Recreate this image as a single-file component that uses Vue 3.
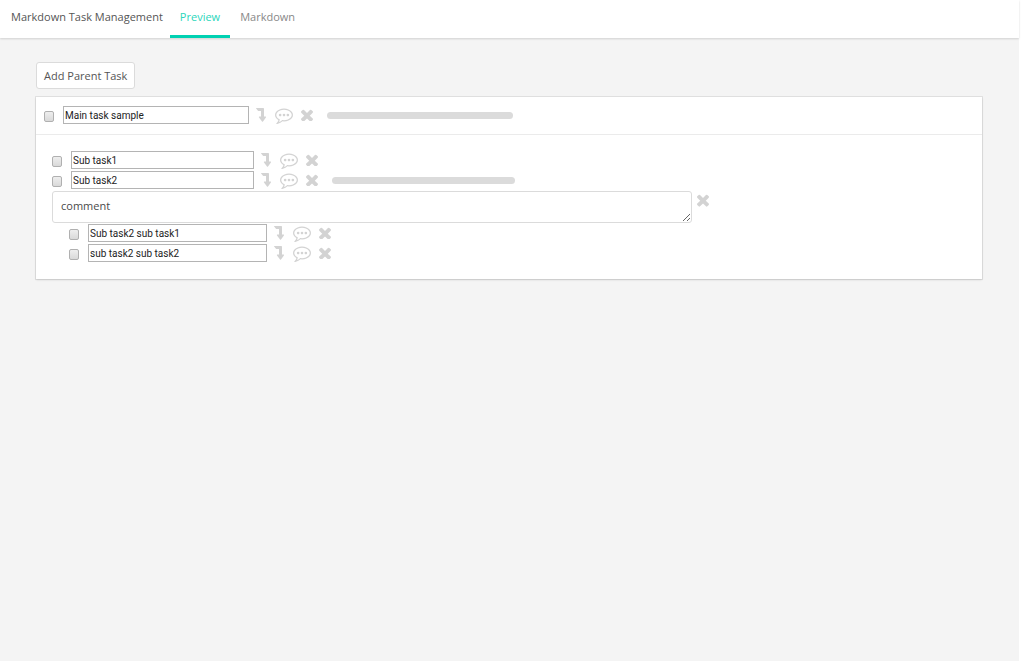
<script setup>
import { ref, reactive } from 'vue'

const activeTab = ref('Preview')
const rows = reactive([
  { id: 'main', level: 0, text: 'Main task sample', progress: 0, done: false },
  { id: 'sub1', level: 1, text: 'Sub task1', done: false },
  { id: 'sub2', level: 1, text: 'Sub task2', progress: 0, comment: 'comment', done: false },
  { id: 'sub2-1', level: 2, text: 'Sub task2 sub task1', done: false },
  { id: 'sub2-2', level: 2, text: 'sub task2 sub task2', done: false },
])
const groups = [
  { name: 'head', rows: rows.slice(0, 1) },
  { name: 'body', rows: rows.slice(1) },
]
</script>

<template>
  <div class="page">
    <header class="nav">
      <span class="brand">Markdown Task Management</span>
      <nav class="tabs">
        <a
          v-for="tab in ['Preview', 'Markdown']"
          :key="tab"
          href="#"
          class="tab"
          :class="{ active: tab === activeTab }"
          @click.prevent="activeTab = tab"
        >{{ tab }}</a>
      </nav>
    </header>

    <main class="content">
      <button type="button" class="add">Add Parent Task</button>

      <section class="card">
        <div v-for="group in groups" :key="group.name" :class="group.name">
          <div v-for="row in group.rows" :key="row.id" :class="{ nested: row.level === 2 }">
            <div class="task">
              <input v-model="row.done" type="checkbox" class="check" :aria-label="'Done: ' + row.text">
              <input v-model="row.text" type="text" class="title" aria-label="Task title">
              <div class="icons">
                <button type="button" class="icon down" aria-label="Add sub task">
                  <svg viewBox="0 0 10 14"><path d="M0.3 0H7.3Q8 0 8 0.7V8.5H9.6Q10.3 8.7 9.9 9.4L7 13.4Q6.5 14 6 13.4L3 9.4Q2.6 8.7 3.3 8.5H5V3H2.6Q2.3 3 2 2.7L0.1 0.5Q-0.1 0.1 0.3 0Z" /></svg>
                </button>
                <button type="button" class="icon talk" aria-label="Add comment">
                  <svg viewBox="0 0 1792 1792"><path d="M640 896q0 53-37.5 90.5t-90.5 37.5-90.5-37.5-37.5-90.5 37.5-90.5 90.5-37.5 90.5 37.5 37.5 90.5zm384 0q0 53-37.5 90.5t-90.5 37.5-90.5-37.5-37.5-90.5 37.5-90.5 90.5-37.5 90.5 37.5 37.5 90.5zm384 0q0 53-37.5 90.5t-90.5 37.5-90.5-37.5-37.5-90.5 37.5-90.5 90.5-37.5 90.5 37.5 37.5 90.5zm-512-512q-204 0-381.5 69.5t-282 187.5-104.5 255q0 112 71.5 213.5t201.5 175.5l87 50-27 96q-24 91-70 172 152-63 275-171l43-38 57 6q69 8 130 8 204 0 381.5-69.5t282-187.5 104.5-255-104.5-255-282-187.5-381.5-69.5zm896 512q0 174-120 321.5t-326 233-450 85.5q-70 0-145-8-198 175-460 242-49 14-114 22h-5q-15 0-27-10.5t-16-27.5v-1q-3-4-.5-12t2-10 4.5-9.5l6-9 7-8.5 8-9q7-8 31-34.5t34.5-38 31-39.5 32.5-51 27-59 26-76q-157-89-247.5-220t-90.5-281q0-174 120-321.5t326-233 450-85.5 450 85.5 326 233 120 321.5z" /></svg>
                </button>
                <button type="button" class="icon remove" aria-label="Remove task">
                  <svg viewBox="302 302 1188 1252"><path d="M1490 1322q0 40-28 68l-136 136q-28 28-68 28t-68-28l-294-294-294 294q-28 28-68 28t-68-28l-136-136q-28-28-28-68t28-68l294-294-294-294q-28-28-28-68t28-68l136-136q28-28 68-28t68 28l294 294 294-294q28-28 68-28t68 28l136 136q28 28 28 68t-28 68l-294 294 294 294q28 28 28 68z" /></svg>
                </button>
              </div>
              <div v-if="row.progress !== undefined" class="track" role="progressbar" :aria-valuenow="row.progress">
                <div class="fill" :style="{ width: row.progress + '%' }"></div>
              </div>
            </div>
            <div v-if="row.comment" class="comment">
              <textarea v-model="row.comment" rows="1" aria-label="Comment"></textarea>
              <button type="button" class="icon remove" aria-label="Remove comment">
                <svg viewBox="302 302 1188 1252"><path d="M1490 1322q0 40-28 68l-136 136q-28 28-68 28t-68-28l-294-294-294 294q-28 28-68 28t-68-28l-136-136q-28-28-28-68t28-68l294-294-294-294q-28-28-28-68t28-68l136-136q28-28 68-28t68 28l294 294 294-294q28-28 68-28t68 28l136 136q28 28 28 68t-28 68l-294 294 294 294q28 28 28 68z" /></svg>
              </button>
            </div>
          </div>
        </div>
      </section>
    </main>
  </div>
</template>

<style>
body {
  background: #fff;
}
</style>

<style scoped>
.page,
.page * {
  box-sizing: border-box;
}
.page {
  min-height: 100vh;
  margin-right: 5px;
  background: #f4f4f4;
  color: #555;
  font: 11px/18px "Open Sans", "Noto Sans", sans-serif;
}
.nav {
  display: flex;
  align-items: stretch;
  height: 38px;
  padding-left: 11px;
  background: #fff;
  box-shadow: 0 1px 2px rgba(10, 10, 10, 0.15);
}
.brand {
  padding-top: 8px;
  margin-right: 7px;
}
.tabs {
  display: flex;
}
.tab {
  padding: 8px 10px 0;
  color: #888;
  text-decoration: none;
  border-bottom: 3px solid transparent;
}
.tab.active {
  color: #2bd6bb;
  border-color: #00d1b2;
}
.content {
  padding: 24px 37px 24px 36px;
}
.add {
  display: block;
  height: 27px;
  padding: 0 7px;
  margin-bottom: 8px;
  border: 1px solid #dbdbdb;
  border-radius: 3px;
  background: #fff;
  color: #555;
  font: inherit;
}
.card {
  background: #fff;
  box-shadow: 0 1px 2px rgba(10, 10, 10, 0.12), 0 0 0 1px rgba(10, 10, 10, 0.08);
}
.head {
  padding: 9px 8px 8px;
  border-bottom: 1px solid #ebebeb;
}
.body {
  padding: 16px 16px 15px;
}
.nested {
  padding-left: 17px;
}
.task {
  display: flex;
  align-items: flex-start;
  height: 20px;
}
.check {
  appearance: none;
  flex: none;
  width: 10px;
  height: 11px;
  margin: 5px 9px 0 0;
  border: 1px solid #b0b0b0;
  border-radius: 2px;
  background: linear-gradient(#eee, #d9d9d9);
}
.title {
  flex: none;
  width: 20%;
  height: 18px;
  padding: 0 1px;
  border: 1px solid #b4b4b4;
  background: #fff;
  color: #222;
  font: 10px/16px Roboto, "Open Sans", sans-serif;
}
.icons {
  display: flex;
  flex: none;
  width: 78px;
  height: 18px;
  padding-left: 7px;
  align-items: center;
}
.icon {
  flex: none;
  padding: 0;
  border: 0;
  background: none;
}
.icon svg {
  display: block;
  width: 100%;
  fill: #d3d3d3;
}
.down {
  width: 10px;
  margin-right: 9px;
}
.talk {
  width: 18px;
  margin-right: 8px;
}
.remove {
  width: 12px;
}
.track {
  width: 20%;
  height: 7px;
  margin-top: 6px;
  border-radius: 4px;
  background: #dbdbdb;
  overflow: hidden;
}
.fill {
  height: 100%;
  background: #00d1b2;
}
.comment {
  display: flex;
  align-items: flex-start;
  gap: 5px;
  height: 33px;
}
.comment textarea {
  display: block;
  width: 70%;
  height: 32px;
  padding: 5px 8px;
  border: 1px solid #dbdbdb;
  border-radius: 3px;
  background: #fff;
  color: #4a4a4a;
  font: inherit;
  resize: vertical;
}
.comment .remove {
  margin-top: 3px;
}
</style>
